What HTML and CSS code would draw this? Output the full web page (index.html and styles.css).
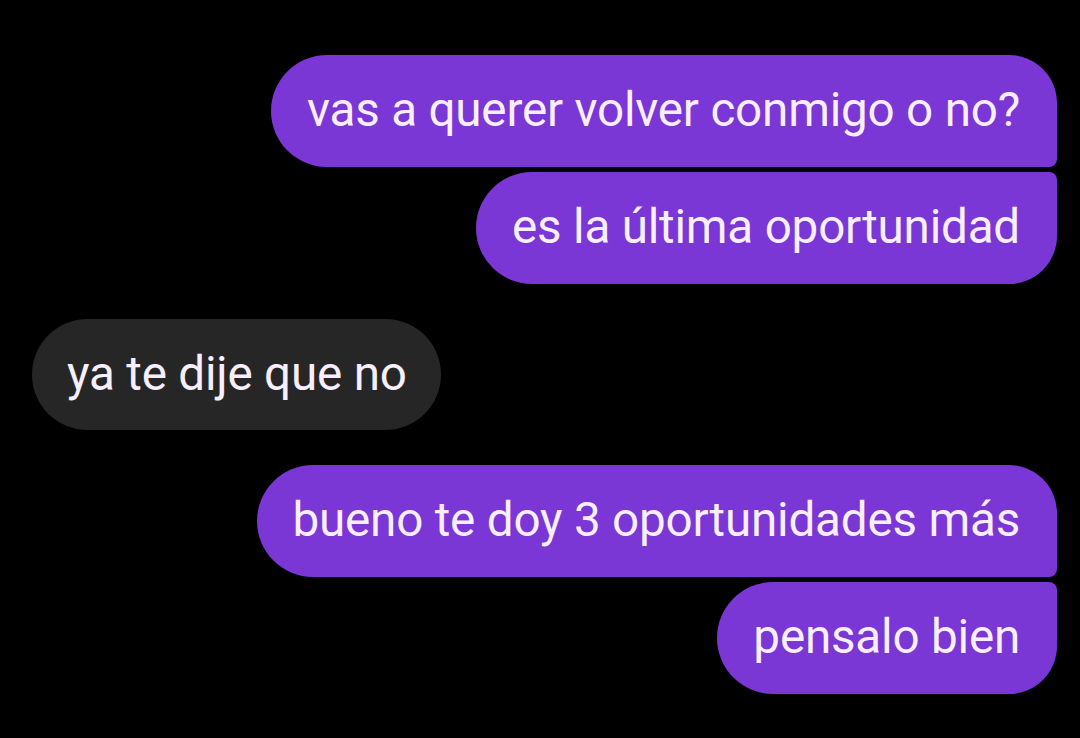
FILE: index.html
```html
<!DOCTYPE html>
<html lang="es">
<head>
<meta charset="utf-8">
<title>Chat</title>
<link rel="stylesheet" href="styles.css">
</head>
<body>
<div class="chat">
  <div class="group out">
    <div class="bubble first">vas a querer volver conmigo o no?</div>
    <div class="bubble last">es la última oportunidad</div>
  </div>
  <div class="group in">
    <div class="bubble single">ya te dije que no</div>
  </div>
  <div class="group out">
    <div class="bubble first">bueno te doy 3 oportunidades más</div>
    <div class="bubble last">pensalo bien</div>
  </div>
</div>
</body>
</html>
```
FILE: styles.css
```css
html, body {
  margin: 0;
  padding: 0;
  background: #000;
  width: 1080px;
  height: 738px;
  overflow: hidden;
}
.chat {
  display: flex;
  flex-direction: column;
  gap: 35px;
  padding: 55px 23px 0 32px;
  font-family: Roboto, "Liberation Sans", sans-serif;
}
.group {
  display: flex;
  flex-direction: column;
  gap: 5px;
}
.group.out { align-items: flex-end; }
.group.in { align-items: flex-start; }
.bubble {
  height: 112px;
  box-sizing: border-box;
  display: flex;
  align-items: center;
  padding: 0 37px 2px 36px;
  font-size: 47.6px;
  color: #f7efff;
  letter-spacing: -0.2px;
  white-space: nowrap;
}
.out .bubble {
  background: #7b36d6;
}
.out .bubble.first {
  border-radius: 56px 48px 8px 56px;
}
.out .bubble.last {
  border-radius: 56px 8px 48px 56px;
}
.in .bubble.single {
  background: #262626;
  border-radius: 56px;
  padding: 0 34px 2px 35px;
  height: 111px;
}
```
